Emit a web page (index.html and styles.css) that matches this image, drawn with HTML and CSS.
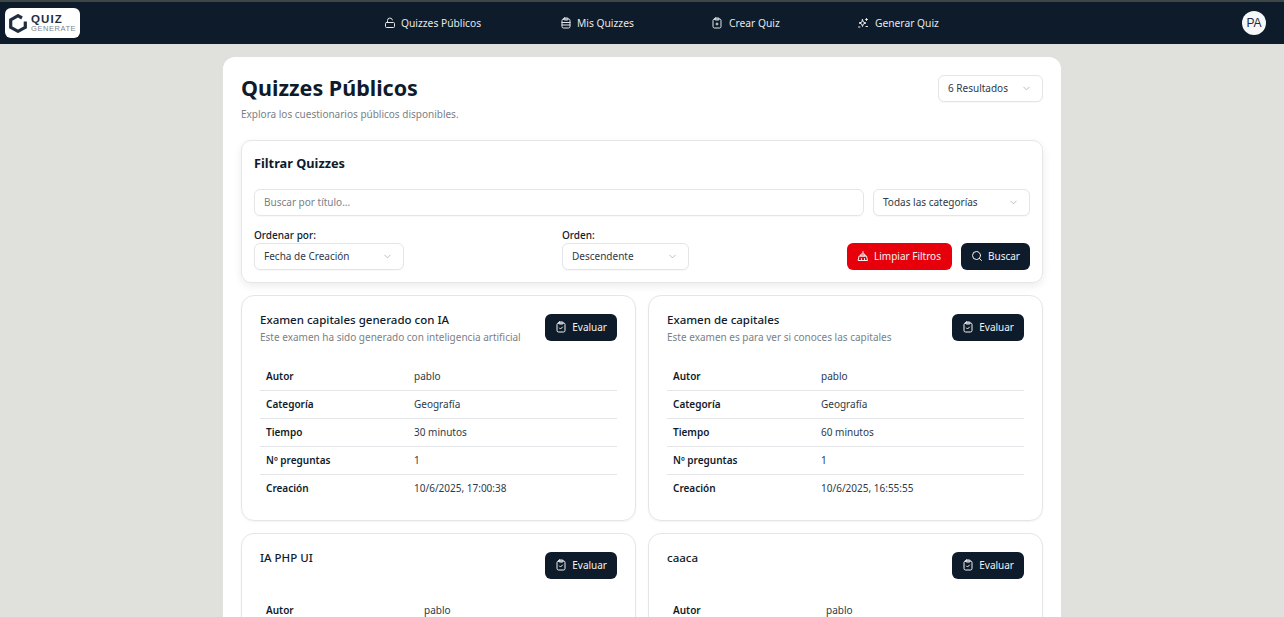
FILE: index.html
```html
<!DOCTYPE html>
<html lang="es">
<head>
<meta charset="utf-8">
<title>Quizzes Públicos</title>
<link rel="stylesheet" href="styles.css">
</head>
<body>
<header class="nav">
  <div class="logo">
    <svg class="logo-mark" viewBox="0 0 18 19" width="18" height="19"><path d="M13 4 9 1.700 1.700 5.900V13.400L9 17.300 16.300 13.400V7.500" fill="none" stroke="#1f2d3f" stroke-width="3.200"/></svg>
    <div class="logo-text"><span class="logo-quiz">QUIZ</span><span class="logo-gen">GENERATE</span></div>
  </div>
  <nav class="links">
    <a class="link link-a"><svg class="ico" viewBox="0 0 24 24"><rect x="3" y="11" width="18" height="10" rx="2"/><path d="M7 11V7a5 5 0 0 1 9.900-1"/></svg>Quizzes Públicos</a>
    <a class="link link-b"><svg class="ico" viewBox="0 0 24 24"><rect x="4" y="4" width="16" height="18" rx="3"/><rect x="8" y="2" width="8" height="4" rx="1"/><path d="M4 11h16M4 16h16"/></svg>Mis Quizzes</a>
    <a class="link link-c"><svg class="ico" viewBox="0 0 24 24"><rect x="4" y="4" width="16" height="18" rx="3"/><rect x="8" y="2" width="8" height="4" rx="1"/><path d="M10 14h4M12 12v4"/></svg>Crear Quiz</a>
    <a class="link link-d"><svg class="ico" viewBox="0 0 24 24"><path d="M11 5l1.800 5.200L18 12l-5.200 1.800L11 19l-1.800-5.200L4 12l5.200-1.800zM19 3v4M17 5h4M3 20h3M18 19h3"/></svg>Generar Quiz</a>
  </nav>
  <div class="avatar">PA</div>
</header>
<div class="page">
<main class="panel">
  <div class="head">
    <div>
      <h1 class="title">Quizzes Públicos</h1>
      <p class="sub">Explora los cuestionarios públicos disponibles.</p>
    </div>
    <div class="select sel-results"><span>6 Resultados</span><svg class="chev" viewBox="0 0 24 24"><path d="M6 9l6 6 6-6"/></svg></div>
  </div>

  <section class="filter">
    <h2 class="filter-title">Filtrar Quizzes</h2>
    <div class="row-search">
      <div class="input">Buscar por título...</div>
      <div class="select sel-cat"><span>Todas las categorías</span><svg class="chev" viewBox="0 0 24 24"><path d="M6 9l6 6 6-6"/></svg></div>
    </div>
    <div class="row-sort">
      <div class="field f-sort">
        <label class="lbl">Ordenar por:</label>
        <div class="select sel-sort"><span>Fecha de Creación</span><svg class="chev" viewBox="0 0 24 24"><path d="M6 9l6 6 6-6"/></svg></div>
      </div>
      <div class="field">
        <label class="lbl">Orden:</label>
        <div class="select sel-ord"><span>Descendente</span><svg class="chev" viewBox="0 0 24 24"><path d="M6 9l6 6 6-6"/></svg></div>
      </div>
      <div class="actions">
        <button class="btn btn-red"><svg class="ico" viewBox="0 0 24 24"><path d="M12 3v5M9 8h6l1.500 4h-9zM5 12h14l2 9H3zM9 21v-4M15 21v-4"/></svg>Limpiar Filtros</button>
        <button class="btn"><svg class="ico" viewBox="0 0 24 24"><circle cx="11" cy="11" r="8"/><path d="M21 21l-4.300-4.300"/></svg>Buscar</button>
      </div>
    </div>
  </section>

  <section class="grid">
    <article class="card">
      <div class="card-head">
        <div><h3 class="card-title">Examen capitales generado con IA</h3><p class="card-desc">Este examen ha sido generado con inteligencia artificial</p></div>
        <button class="btn"><svg class="ico" viewBox="0 0 24 24"><rect x="4" y="4" width="16" height="18" rx="3"/><rect x="8" y="2" width="8" height="4" rx="1"/><path d="M9 14l2 2 4-4"/></svg>Evaluar</button>
      </div>
      <dl class="table">
        <div class="tr"><dt>Autor</dt><dd>pablo</dd></div>
        <div class="tr"><dt>Categoría</dt><dd>Geografía</dd></div>
        <div class="tr"><dt>Tiempo</dt><dd>30 minutos</dd></div>
        <div class="tr"><dt>Nº preguntas</dt><dd>1</dd></div>
        <div class="tr"><dt>Creación</dt><dd>10/6/2025, 17:00:38</dd></div>
      </dl>
    </article>
    <article class="card">
      <div class="card-head">
        <div><h3 class="card-title">Examen de capitales</h3><p class="card-desc">Este examen es para ver si conoces las capitales</p></div>
        <button class="btn"><svg class="ico" viewBox="0 0 24 24"><rect x="4" y="4" width="16" height="18" rx="3"/><rect x="8" y="2" width="8" height="4" rx="1"/><path d="M9 14l2 2 4-4"/></svg>Evaluar</button>
      </div>
      <dl class="table">
        <div class="tr"><dt>Autor</dt><dd>pablo</dd></div>
        <div class="tr"><dt>Categoría</dt><dd>Geografía</dd></div>
        <div class="tr"><dt>Tiempo</dt><dd>60 minutos</dd></div>
        <div class="tr"><dt>Nº preguntas</dt><dd>1</dd></div>
        <div class="tr"><dt>Creación</dt><dd>10/6/2025, 16:55:55</dd></div>
      </dl>
    </article>
    <article class="card">
      <div class="card-head card-head-s">
        <div><h3 class="card-title">IA PHP UI</h3></div>
        <button class="btn"><svg class="ico" viewBox="0 0 24 24"><rect x="4" y="4" width="16" height="18" rx="3"/><rect x="8" y="2" width="8" height="4" rx="1"/><path d="M9 14l2 2 4-4"/></svg>Evaluar</button>
      </div>
      <dl class="table t-wide">
        <div class="tr"><dt>Autor</dt><dd>pablo</dd></div>
      </dl>
    </article>
    <article class="card">
      <div class="card-head card-head-s">
        <div><h3 class="card-title">caaca</h3></div>
        <button class="btn"><svg class="ico" viewBox="0 0 24 24"><rect x="4" y="4" width="16" height="18" rx="3"/><rect x="8" y="2" width="8" height="4" rx="1"/><path d="M9 14l2 2 4-4"/></svg>Evaluar</button>
      </div>
      <dl class="table t-mid">
        <div class="tr"><dt>Autor</dt><dd>pablo</dd></div>
      </dl>
    </article>
  </section>
</main>
</div>
</body>
</html>
```

FILE: styles.css
```css
* { box-sizing: border-box; }
html, body { margin: 0; height: 100%; overflow: hidden; }
body { background: #e0e1dc; color: #0f1b2b; font-family: "Noto Sans", "Open Sans", sans-serif; font-size: 10px; }

.ico { width: 12px; height: 12px; fill: none; stroke: currentColor; stroke-width: 2; stroke-linecap: round; stroke-linejoin: round; flex: none; }
.chev { width: 11px; height: 11px; fill: none; stroke: #b4b8bd; stroke-width: 2; stroke-linecap: round; stroke-linejoin: round; flex: none; }

.nav { height: 44px; background: #0d1b2a; border-top: 2px solid #3d4747; display: flex; align-items: center; padding: 0 18px 0 5px; }
.logo { width: 75px; height: 30px; background: #fff; border-radius: 6px; display: flex; align-items: center; gap: 4px; padding-left: 4px; flex: none; }
.logo-text { display: flex; flex-direction: column; }
.logo-quiz { font: 700 11.500px/11px "Liberation Sans", sans-serif; letter-spacing: 1.100px; color: #1f2d3f; }
.logo-gen { font: 400 7.500px/8px "Liberation Sans", sans-serif; letter-spacing: .550px; color: #7d8693; }
.links { display: flex; align-items: center; margin-left: 304px; color: #e6e8ea; }
.link { display: flex; align-items: center; gap: 5px; font-size: 10.250px; }
.link-a { width: 176px; }
.link-b { width: 151px; }
.link-c { width: 146px; gap: 6px; }
.link-d { gap: 6px; }
.avatar { margin-left: auto; width: 24px; height: 24px; border-radius: 50%; background: #f6f7f8; color: #1f2d3f; display: flex; align-items: center; justify-content: center; font: 400 12px "Liberation Sans", sans-serif; }

.page { padding-top: 13px; display: flex; justify-content: center; }
.panel { width: 838px; background: #fff; border-radius: 12px; padding: 18px 18px 40px; }
.head { display: flex; justify-content: space-between; align-items: flex-start; height: 65px; }
.title { margin: 0; font-size: 21.500px; line-height: 26px; font-weight: 700; color: #0f1b2b; }
.sub { margin: 5px 0 0; font-size: 10px; line-height: 16px; color: #7a7f87; }

.select { display: flex; justify-content: space-between; align-items: center; height: 27px; padding: 0 10px 1px 9px; border: 1px solid #e3e5e8; border-radius: 6px; background: #fff; color: #2e3a49; font-size: 10px; box-shadow: 0 1px 1px rgba(0,0,0,.03); }
.sel-results { width: 105px; }
.sel-cat { width: 157px; }
.sel-sort { width: 150px; }
.sel-ord { width: 127px; }

.filter { height: 143px; border: 1px solid #e5e6e8; border-radius: 10px; padding: 13px 12px 12px; box-shadow: 0 3px 8px rgba(0,0,0,.08); display: flex; flex-direction: column; }
.filter-title { margin: 0; font-size: 12.750px; line-height: 18px; font-weight: 700; color: #0f1b2b; }
.row-search { display: flex; gap: 9px; margin-top: 17px; }
.input { flex: 1; height: 27px; padding: 0 0 1px 9px; display: flex; align-items: center; border: 1px solid #e3e5e8; border-radius: 6px; color: #7a7f87; font-size: 10px; box-shadow: 0 1px 1px rgba(0,0,0,.03); }
.row-sort { display: flex; align-items: flex-end; margin-top: 12px; }
.field { display: flex; flex-direction: column; gap: 1px; }
.f-sort { width: 308px; }
.lbl { font-size: 10px; line-height: 14px; color: #0f1b2b; font-weight: 500; }
.actions { margin-left: auto; display: flex; gap: 9px; }

.btn { height: 27px; display: inline-flex; align-items: center; gap: 5px; padding: 0 10px 1px; border: 0; border-radius: 6px; background: #0d1b2a; color: #f2f3f4; font-family: inherit; font-size: 10px; flex: none; }
.btn-red { background: #e7000b; width: 105px; }

.grid { display: grid; grid-template-columns: 395px 395px; gap: 12px; margin-top: 12px; }
.card { height: 226px; border: 1px solid #e3e5e8; border-radius: 13px; padding: 18px 18px 0; box-shadow: 0 1px 2px rgba(0,0,0,.05); }
.card-head { display: flex; justify-content: space-between; align-items: flex-start; height: 49px; }
.card-head-s { height: 45px; }
.card-title { margin: -2px 0 0; font-size: 11.500px; line-height: 15px; font-weight: 500; color: #0f1b2b; }
.card-desc { margin: 3px 0 0; font-size: 10px; line-height: 15px; color: #7a7f87; }
.table { margin: 0; }
.tr { display: flex; align-items: center; height: 28px; padding: 0 0 1px 6px; border-bottom: 1px solid #e3e5e8; }
.tr:last-child { border-bottom-color: transparent; }
.tr dt { width: 148px; font-size: 10px; font-weight: 600; color: #0f1b2b; }
.tr dd { margin: 0; font-size: 10px; color: #2e3a49; }
.t-wide .tr dt { width: 158px; }
.t-mid .tr dt { width: 153px; }
```
